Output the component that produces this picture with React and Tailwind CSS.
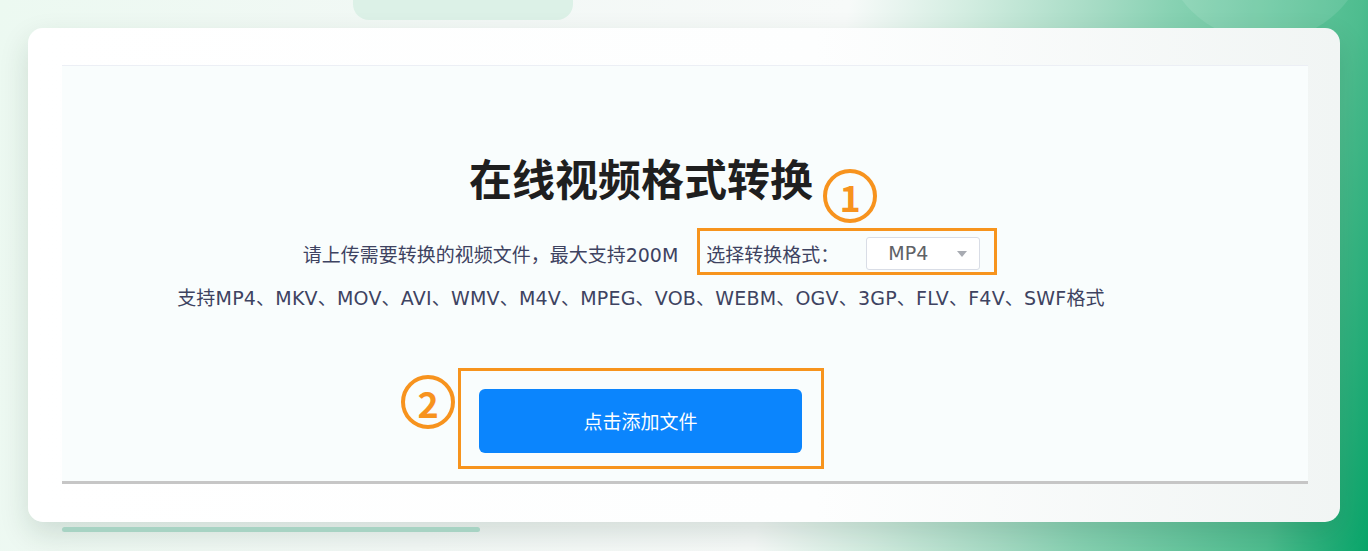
import React from "react";

const FONT = { fontFamily: '"DejaVu Sans", "Noto Sans CJK SC", sans-serif' };
const CJK = { fontFamily: '"Noto Sans CJK SC", sans-serif' };

const Badge = ({ n, className }) => (
  <div
    style={CJK}
    className={`absolute flex items-center justify-center w-[54px] h-[54px] rounded-full border-[4px] border-[#f7931e] text-[#f7931e] text-[36px] font-semibold leading-none ${className}`}
  >
    {n}
  </div>
);

const App = () => {
  return (
    <div
      style={FONT}
      className="relative w-[1368px] h-[551px] overflow-hidden bg-[linear-gradient(100deg,#ecf9f1_0%,#f3f8f6_35%,#f7faf9_58%,#d3ede1_66%,#a5dbc4_75%,#88d2b3_80%,#4ebd8f_93%,#08a469_100%)]"
    >
      {/* decorative blob top right */}
      <div className="absolute left-[1162px] -top-[160px] w-[206px] h-[200px] rounded-full bg-white/10" />

      {/* top strip with tab */}
      <div className="relative h-[28px]">
        <div className="ml-[353px] w-[220px] h-[20px] rounded-b-[16px] bg-[#dcf1e7]" />
      </div>

      {/* card */}
      <div className="relative px-[28px]">
        <div className="h-[494px] rounded-[15px] bg-[linear-gradient(90deg,#ffffff_0%,#fdfefe_60%,#f1f5f4_100%)] shadow-[0_12px_30px_rgba(0,50,30,0.14)] pt-[37px] pl-[34px] pr-[32px]">
          <div className="h-[419px] bg-[#f9fdfd] border-t border-[#eceff5] border-b-[3px] border-b-[#c6c6c6] flex flex-col items-center pr-[88px]">
            <div className="relative mt-[89px] h-[44px]">
              <h1 style={CJK} className="text-[43px] leading-[44px] font-bold text-[#1f1f1f]">
                在线视频格式转换
              </h1>
              <Badge n="1" className="left-[calc(100%+10px)] top-[14px]" />
            </div>

            <div className="mt-[29px] flex items-center pl-[18px] text-[19px] text-[#3e4361]">
              <span className="pt-[7px]">请上传需要转换的视频文件，最大支持200M</span>
              <div className="ml-[19px] w-[300px] h-[47px] border-[3px] border-[#f7941d] flex items-center pl-[6px]">
                <span className="pt-[7px]">选择转换格式：</span>
                <div className="ml-[27px] mt-[4px] w-[114px] h-[33px] bg-white border border-[#d9dde6] rounded-[3px] flex items-center pl-[21px] pr-[12px]">
                  <span className="text-[#606266]">MP4</span>
                  <span className="ml-auto w-0 h-0 border-l-[5px] border-r-[5px] border-t-[6px] border-l-transparent border-r-transparent border-t-[#a8abb2]" />
                </div>
              </div>
            </div>

            <p className="mt-[11px] text-[19px] leading-[24px] tracking-[0.2px] text-[#3e4361]">
              支持MP4、MKV、MOV、AVI、WMV、M4V、MPEG、VOB、WEBM、OGV、3GP、FLV、F4V、SWF格式
            </p>

            <div className="relative mt-[58px] w-[366px] h-[101px] border-[3px] border-[#f7941d] pt-[18px] pl-[18px]">
              <Badge n="2" className="right-[calc(100%+6px)] top-[4px]" />
              <button style={CJK} className="w-[323px] h-[64px] rounded-[6px] bg-[#0b85fd] text-white text-[19px]">
                点击添加文件
              </button>
            </div>
          </div>
        </div>
        <div className="ml-[34px] mt-[5px] w-[418px] h-[5px] rounded-full bg-[#a7d3c3]" />
      </div>
    </div>
  );
};

export default App;
